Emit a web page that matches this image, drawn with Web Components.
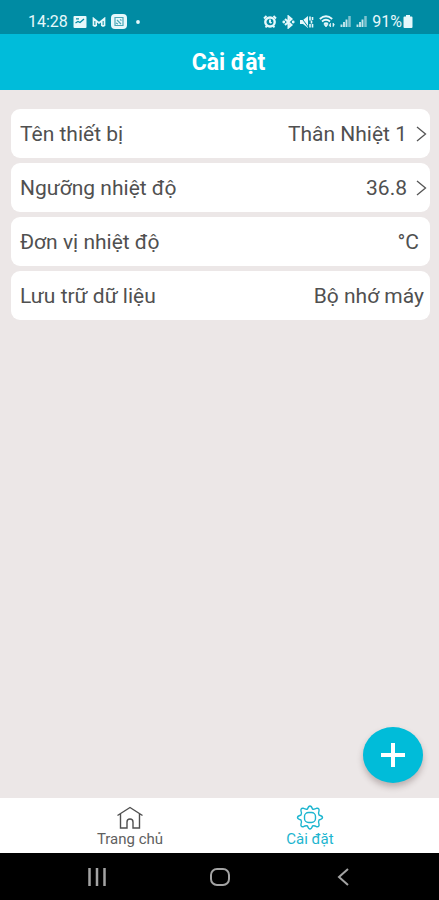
<!DOCTYPE html>
<html lang="vi">
<head>
<meta charset="utf-8">
<meta name="viewport" content="width=device-width, initial-scale=1">
<title>Cài đặt</title>
<style>
  html, body { margin: 0; height: 100%; }
  body { font-family: Roboto, "Noto Sans", sans-serif; background: #ece7e7; }
</style>
</head>
<body>
<settings-app></settings-app>
<script>
const define = (name, html) => {
  const tpl = document.createElement('template');
  tpl.innerHTML = html;
  customElements.define(name, class extends HTMLElement {
    constructor() {
      super();
      this.attachShadow({ mode: 'open' }).append(tpl.content.cloneNode(true));
    }
  });
};

define('status-bar', `
<style>
  :host { display: flex; justify-content: space-between; align-items: center; height: 34px; box-sizing: border-box;
    padding: 9px 26px 0 28px; background: #008ba3; color: #e6f8fb; font-size: 16px; line-height: 20px; }
  .group { display: flex; align-items: center; gap: 5px; }
  .battery { gap: 1px; }
  svg { display: block; }
</style>
<div class="group">
  <span>14:28</span>
  <svg width="14" height="12" viewBox="0 0 14 12"><rect x=".5" width="13" height="12" rx="1" fill="#e6f8fb"/><path d="M2.500 7 5 5.500l2 1L11 3M3 2.800h3" fill="none" stroke="#008ba3" stroke-width="1.300"/></svg>
  <svg width="14" height="10" viewBox="0 0 14 10"><path d="M1.500 9V1.500L7 6l5.500-4.500V9M4.200 9V4M9.800 9V4M1.500 8.800h2.700M9.800 8.800h2.700" fill="none" stroke="#e6f8fb" stroke-width="1.700"/></svg>
  <svg width="16" height="15" viewBox="0 0 16 15"><rect width="16" height="15" rx="4" fill="#e6f8fb"/><path d="M4 3.500h8v8H4zM6 6l4 4M9 5.500l1.500 1M5 9l2 1" fill="none" stroke="#4aa9b8" stroke-width="1.200"/></svg>
  <svg width="12" height="4" viewBox="0 0 12 4"><circle cx="6" cy="2" r="1.900" fill="#e6f8fb"/></svg>
</div>
<div class="group">
  <svg width="14" height="13" viewBox="0 0 14 13"><ellipse cx="7" cy="7" rx="4.700" ry="4.500" fill="none" stroke="#e6f8fb" stroke-width="2.400"/><path d="M1 3.500 3.500 1M13 3.500 10.500 1M2.500 12.300l2-2M11.500 12.300l-2-2M7 4.500V7l1.500 1" fill="none" stroke="#e6f8fb" stroke-width="1.900"/></svg>
  <svg width="13" height="14" viewBox="0 0 13 14"><path d="M3 4 9.500 10 6.500 12.500V1.500L9.500 4 3 10" fill="none" stroke="#e6f8fb" stroke-width="2"/><circle cx="1.800" cy="7" r="1.400" fill="#e6f8fb"/><circle cx="11.200" cy="7" r="1.400" fill="#e6f8fb"/></svg>
  <svg width="14" height="14" viewBox="0 0 14 14"><path d="M0 5h3l5-4v12L3 9H0z" fill="#e6f8fb"/><path d="M0 1l9 12" stroke="#008ba3" stroke-width="1"/><path d="M10 1.500v4M12.500 2v3M11.500 5.500v3M10 9v3.500M12.500 9v3.500" fill="none" stroke="#e6f8fb" stroke-width="1.600"/></svg>
  <svg width="16" height="13" viewBox="0 0 16 13"><path d="M.8 4Q7-1.500 13.200 4M3 6.500q4-3.500 8 0M5 8.800q2-1.500 4 0" fill="none" stroke="#e6f8fb" stroke-width="1.800"/><path d="M7 12 5 9.500h4zM11.500 8v4L10 10M14 12V8l1.500 2" fill="#e6f8fb" stroke="#e6f8fb" stroke-width=".7"/></svg>
  <svg width="11" height="11" viewBox="0 0 11 11"><path d="M1.500 11V8.500M4 11V6M6.500 11V3.500" stroke="#c4e6ec" stroke-width="1.900"/><path d="M9.500 11V0" stroke="#7fc3cf" stroke-width="2.500"/></svg>
  <svg width="11" height="11" viewBox="0 0 11 11"><path d="M1.500 11V8.500M4 11V6M6.500 11V3.500" stroke="#c4e6ec" stroke-width="1.900"/><path d="M9.500 11V0" stroke="#7fc3cf" stroke-width="2.500"/></svg>
  <span class="group battery"><span>91%</span>
  <svg width="10" height="13" viewBox="0 0 10 13"><path d="M3 0h4v1.500h1.500a1 1 0 0 1 1 1V12a1 1 0 0 1-1 1h-7a1 1 0 0 1-1-1V2.500a1 1 0 0 1 1-1H3z" fill="#e6f8fb"/></svg></span>
</div>`);

define('title-bar', `
<style>
  :host { display: flex; justify-content: center; align-items: center; height: 56px; box-sizing: border-box; padding: 2px 0 0 18px; background: #00bcda; color: #fff; }
  h1 { margin: 0; font-size: 23px; line-height: 28px; font-weight: 700; }
</style>
<h1><slot></slot></h1>`);

const rowStyle = `
  :host { display: block; }
  .row { display: flex; align-items: center; justify-content: space-between; width: 100%; height: 49px; box-sizing: border-box;
    margin: 0; padding: 0 6px 0 9px; border: 0; border-radius: 9px; background: #fff; color: #505050;
    font: 400 21px/24px Roboto, "Noto Sans", sans-serif; text-align: left; }
  .value { display: flex; align-items: center; gap: 9px; }`;

define('setting-link', `
<style>${rowStyle} .row { padding-right: 3px; }</style>
<button class="row" type="button"><slot name="label"></slot>
  <span class="value"><slot></slot><svg width="11" height="16" viewBox="0 0 11 16"><path d="M1 1l8.500 7L1 15" fill="none" stroke="#555" stroke-width="1.300"/></svg></span>
</button>`);

define('setting-info', `
<style>${rowStyle}</style>
<div class="row"><slot name="label"></slot><span class="value"><slot></slot></span></div>`);

define('add-button', `
<style>
  :host { display: block; }
  button { display: grid; place-items: center; width: 60px; height: 56px; padding: 0; border: 0; border-radius: 50%;
    background: #00bcd9; box-shadow: 0 4px 6px rgba(80,60,60,.32); }
</style>
<button type="button" aria-label="Thêm"><svg width="26" height="26" viewBox="0 0 26 26"><path d="M13 1v24M1 13h24" stroke="#fff" stroke-width="4"/></svg></button>`);

define('tab-item', `
<style>
  :host { display: flex; justify-content: center; color: #606060; }
  :host([current]) { color: #1cb5cf; }
  a { display: flex; flex-direction: column; align-items: center; color: inherit; text-decoration: none; font-size: 15px; line-height: 16px; }
</style>
<a href="#"><slot name="icon"></slot><span><slot></slot></span></a>`);

define('tab-bar', `
<style>
  :host { display: grid; grid-template-columns: 1fr 1fr; height: 55px; box-sizing: border-box; padding: 7px 39px 0 40px; background: #fff; }
</style>
<slot></slot>`);

define('system-nav', `
<style>
  :host { display: grid; grid-template-columns: 1fr 1fr 1fr; height: 47px; padding: 0 35px; background: #000; }
  button { display: grid; place-items: center; border: 0; padding: 0; background: none; }
  svg { fill: none; stroke: #a3a3a3; stroke-width: 2; }
</style>
<button type="button" aria-label="Gần đây"><svg width="20" height="18" viewBox="0 0 20 18"><path d="M2.500 0v18M10 0v18M17.500 0v18" stroke-width="2.500"/></svg></button>
<button type="button" aria-label="Màn hình chính"><svg width="20" height="18" viewBox="0 0 20 18"><rect x="1" y="1" width="18" height="16" rx="6"/></svg></button>
<button type="button" aria-label="Quay lại"><svg width="12" height="18" viewBox="0 0 12 18"><path d="M11 1 2 9l9 8"/></svg></button>`);

define('settings-app', `
<style>
  :host { display: flex; flex-direction: column; min-height: 100vh; }
  main { flex: 1; display: flex; flex-direction: column; gap: 5px; padding: 19px 9px 0 11px; background: #ece7e7; }
  add-button { margin: auto 7px 15px auto; }
  .unit { padding-right: 5px; }
  svg { display: block; }
</style>
<status-bar></status-bar>
<title-bar>Cài đặt</title-bar>
<main>
  <setting-link><span slot="label">Tên thiết bị</span>Thân Nhiệt 1</setting-link>
  <setting-link><span slot="label">Ngưỡng nhiệt độ</span>36.8</setting-link>
  <setting-info><span slot="label">Đơn vị nhiệt độ</span><span class="unit">°C</span></setting-info>
  <setting-info><span slot="label">Lưu trữ dữ liệu</span>Bộ nhớ máy</setting-info>
  <add-button></add-button>
</main>
<tab-bar>
  <tab-item>
    <svg slot="icon" width="28" height="26" viewBox="0 0 28 26"><path d="M1.500 10.500 14 2.500l12.500 8M4.500 9v14H11v-6q0-3 3-3t3 3v6h6.500V9" fill="none" stroke="#505050" stroke-width="1.400"/></svg>
    Trang chủ
  </tab-item>
  <tab-item current>
    <svg slot="icon" width="28" height="26" viewBox="0 0 28 26"><path fill="none" stroke="#1cb5cf" stroke-width="1.400" stroke-linejoin="round" d="M14 1Q15.500 1 16.500 4Q18 4.700 21 3.200Q23.500 3 23 6Q22 8 23 10Q26.500 11 26.500 12.500Q26.500 14 23 15Q22 17 23 19Q23.500 22 21 21.800Q18 20.300 16.500 21Q15.500 24 14 24Q12.500 24 11.500 21Q10 20.300 7 21.800Q4.500 22 5 19Q6 17 5 15Q1.500 14 1.500 12.500Q1.500 11 5 10Q6 8 5 6Q4.500 3 7 3.200Q10 4.700 11.500 4Q12.500 1 14 1Z"/><rect x="8.500" y="7.500" width="11" height="10" rx="4" fill="none" stroke="#1cb5cf" stroke-width="1.400"/></svg>
    Cài đặt
  </tab-item>
</tab-bar>
<system-nav></system-nav>`);
</script>
</body>
</html>
